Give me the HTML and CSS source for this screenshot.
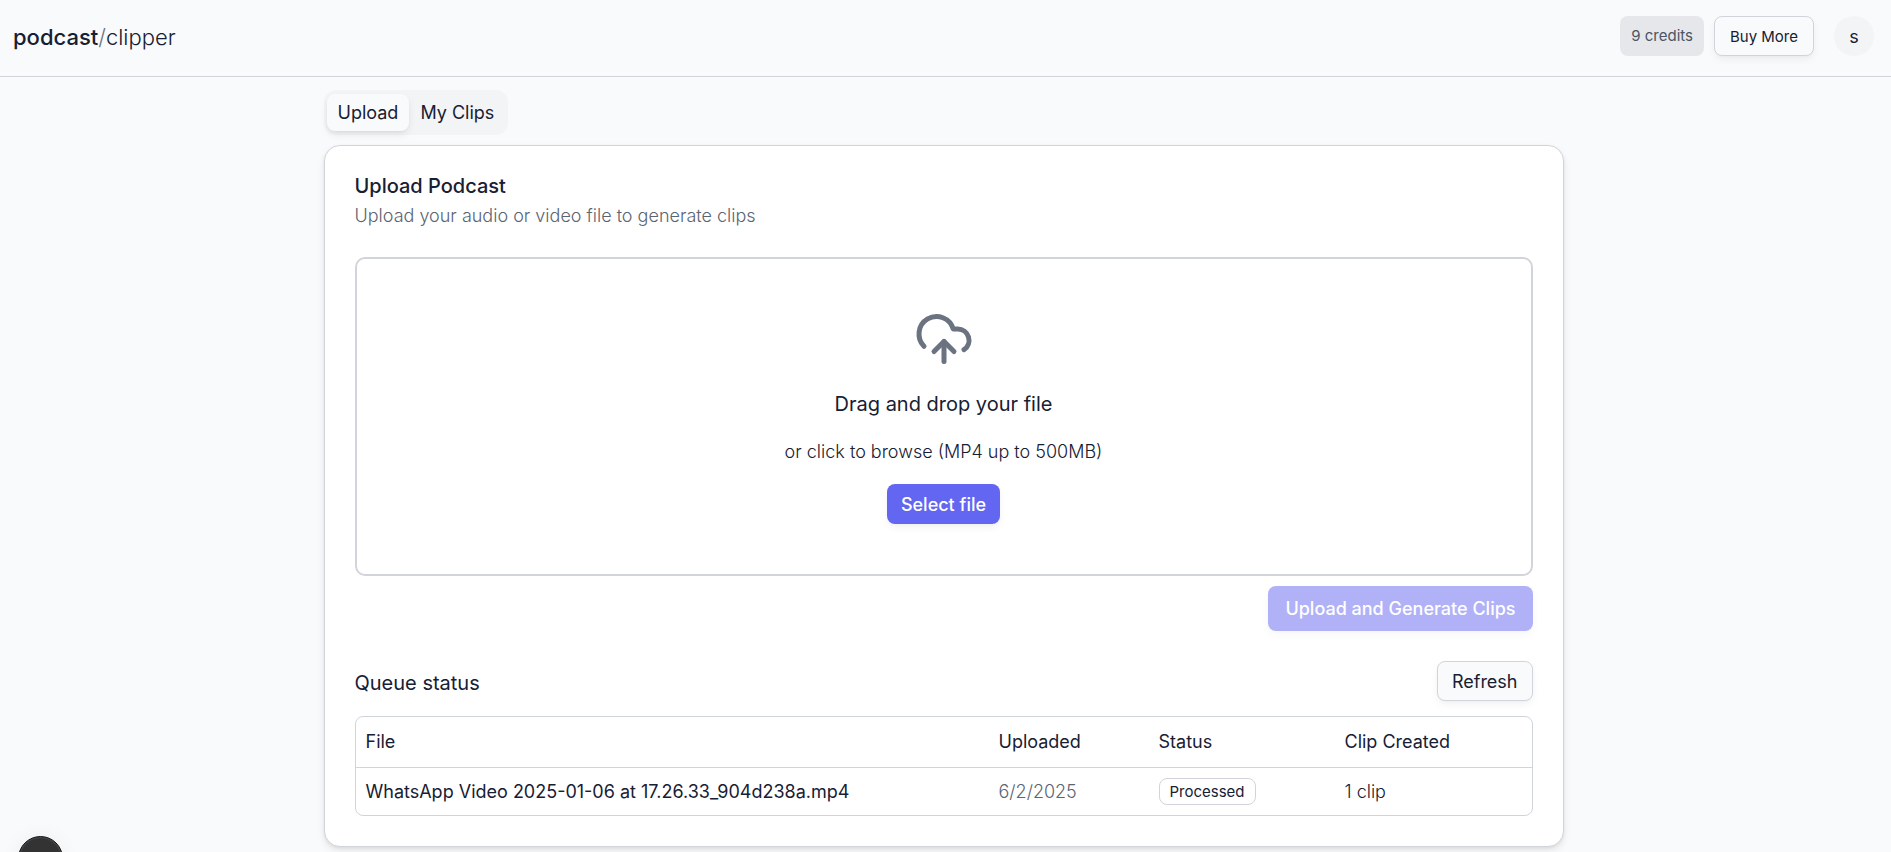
FILE: index.html
```html
<!DOCTYPE html>
<html lang="en">
<head>
<meta charset="utf-8">
<meta name="viewport" content="width=device-width, initial-scale=1">
<title>Podcast Clipper</title>
<link rel="stylesheet" href="styles.css">
</head>
<body>
<header class="header">
  <a class="logo" href="#"><span class="logo-strong">podcast</span><span class="logo-slash">/</span><span>clipper</span></a>
  <div class="account">
    <div class="credits-group">
      <span class="credits">9 credits</span>
      <button class="btn btn-outline btn-small" type="button">Buy More</button>
    </div>
    <button class="avatar" type="button" aria-label="Account menu">s</button>
  </div>
</header>
<main class="main">
  <div class="content">
    <div class="tabs" role="tablist">
      <button class="tab tab-active" type="button" role="tab" aria-selected="true">Upload</button>
      <button class="tab" type="button" role="tab" aria-selected="false">My Clips</button>
    </div>
    <section class="card">
      <div class="card-header">
        <h1 class="card-title">Upload Podcast</h1>
        <p class="card-description">Upload your audio or video file to generate clips</p>
      </div>
      <div class="dropzone">
        <svg class="cloud" viewBox="0 0 24 24" fill="none" stroke="currentColor" stroke-width="2" stroke-linecap="round" stroke-linejoin="round" aria-hidden="true"><path d="M12 13v8"/><path d="M4 14.899A7 7 0 1 1 15.71 8h1.79a4.5 4.5 0 0 1 2.5 8.242"/><path d="m8 17 4-4 4 4"/></svg>
        <p class="drop-title">Drag and drop your file</p>
        <p class="drop-hint">or click to browse (MP4 up to 500MB)</p>
        <button class="btn btn-primary" type="button">Select file</button>
      </div>
      <div class="actions">
        <button class="btn btn-primary btn-large" type="button" disabled>Upload and Generate Clips</button>
      </div>
      <div class="queue-header">
        <h2 class="queue-title">Queue status</h2>
        <button class="btn btn-outline" type="button">Refresh</button>
      </div>
      <div class="table-frame">
        <table class="table">
          <colgroup><col><col class="col-uploaded"><col class="col-status"><col class="col-clips"></colgroup>
          <thead><tr><th scope="col">File</th><th scope="col">Uploaded</th><th scope="col">Status</th><th scope="col">Clip Created</th></tr></thead>
          <tbody><tr><td class="file">WhatsApp Video 2025-01-06 at 17.26.33_904d238a.mp4</td><td class="muted">6/2/2025</td><td><span class="badge">Processed</span></td><td>1 clip</td></tr></tbody>
        </table>
      </div>
    </section>
  </div>
</main>
<button class="dev-button" type="button" aria-label="Open developer tools"></button>
</body>
</html>
```
FILE: styles.css
```css
:root {
  --ink: #172033;
  --muted: #6b7280;
  --muted-text: #5b6472;
  --line: #d1d5db;
  --page: #f9fafb;
  --primary: #6366f1;
  --shadow: 0 4px 8px -1px rgb(0 0 0 / 0.06), 0 1px 2px 0 rgb(0 0 0 / 0.02);
}
* { box-sizing: border-box; }
body {
  margin: 0;
  min-height: 100vh;
  overflow: hidden auto;
  background: var(--page);
  color: var(--ink);
  font: 300 18px/25px Inter, "Liberation Sans", sans-serif;
}
h1, h2, p { margin: 0; }
button { margin: 0; font: inherit; color: inherit; cursor: pointer; }
.header {
  display: flex;
  align-items: center;
  justify-content: space-between;
  padding: 16px 17px 20px 13px;
  border-bottom: 1px solid var(--line);
}
.logo { color: inherit; font-size: 22px; line-height: 30px; padding-top: 2px; text-decoration: none; }
.logo-strong { font-weight: 500; }
.logo-slash { color: var(--muted); }
.account { display: flex; align-items: center; gap: 20px; }
.credits-group { display: flex; align-items: center; gap: 10px; }
.credits {
  height: 40px;
  padding: 0 11px;
  border-radius: 8px;
  background: #e5e7eb;
  color: #4b5563;
  font-size: 15px;
  font-weight: 400;
  line-height: 40px;
}
.avatar {
  width: 40px;
  height: 40px;
  padding: 0;
  border: 0;
  border-radius: 50%;
  background: #f3f4f6;
  font-weight: 400;
}
.btn {
  height: 40px;
  padding: 0 14px;
  border: 1px solid transparent;
  border-radius: 8px;
  font-weight: 400;
  white-space: nowrap;
  box-shadow: var(--shadow);
}
.btn-outline { border-color: var(--line); background: var(--page); }
.btn-small { padding: 0 15px; font-size: 15px; }
.btn-primary { padding: 0 13px; background: var(--primary); color: #fff; font-weight: 500; }
.btn-large { height: 45px; padding: 0 16px; }
.btn:disabled { opacity: 0.5; cursor: default; }
.main { padding: 13px 4px 40px 0; }
.content { max-width: 1240px; margin: 0 auto; }
.tabs {
  display: flex;
  width: fit-content;
  height: 45px;
  padding: 4px 3px;
  border-radius: 12px;
  background: #f3f4f6;
}
.tab {
  padding: 0 11px;
  border: 0;
  border-radius: 8px;
  background: transparent;
  font-weight: 400;
}
.tab-active { background: var(--page); box-shadow: 0 4px 8px -1px rgb(0 0 0 / 0.09), 0 1px 2px 0 rgb(0 0 0 / 0.04); }
.card {
  margin-top: 10px;
  padding: 30px;
  border: 1px solid var(--line);
  border-radius: 16px;
  background: #fff;
  box-shadow: 0 4px 8px -1px rgb(0 0 0 / 0.1), 0 1px 3px 0 rgb(0 0 0 / 0.06);
}
.card-header { display: grid; gap: 7px; margin-bottom: 29px; }
.card-title { font-size: 20px; font-weight: 500; line-height: 20px; }
.card-description, .muted { color: var(--muted-text); }
.dropzone {
  display: flex;
  flex-direction: column;
  align-items: center;
  gap: 20px;
  padding: 50px;
  border: 2px solid var(--line);
  border-radius: 10px;
}
.cloud { width: 60px; height: 60px; color: var(--muted); }
.drop-title { font-size: 20px; font-weight: 400; line-height: 30px; }
.actions { display: flex; justify-content: flex-end; margin-top: 10px; }
.queue-header { display: flex; align-items: center; justify-content: space-between; margin: 30px 0 15px; }
.queue-title { padding-top: 4px; font-size: 20px; font-weight: 400; line-height: 30px; }
.table-frame { border: 1px solid var(--line); border-radius: 8px; }
.table { width: 100%; table-layout: fixed; border-collapse: collapse; }
.table th, .table td { padding: 0 10px; text-align: left; }
.table th { height: 50px; border-bottom: 1px solid var(--line); font-weight: 400; }
.table td { height: 48px; }
.col-uploaded { width: 160px; }
.col-status { width: 186px; }
.col-clips { width: 197px; }
.table .file { font-weight: 400; }
.badge {
  display: block;
  width: fit-content;
  padding: 0 10px;
  border: 1px solid var(--line);
  border-radius: 8px;
  font-size: 15px;
  font-weight: 400;
}
.dev-button {
  position: fixed;
  bottom: -29px;
  left: 18px;
  width: 45px;
  height: 45px;
  padding: 0;
  border: 1px solid #171717;
  border-radius: 50%;
  background: #333;
  box-shadow: inset 0 0 0 1px #4a4a4a, 0 0 20px rgb(0 0 0 / 0.05);
}
```
